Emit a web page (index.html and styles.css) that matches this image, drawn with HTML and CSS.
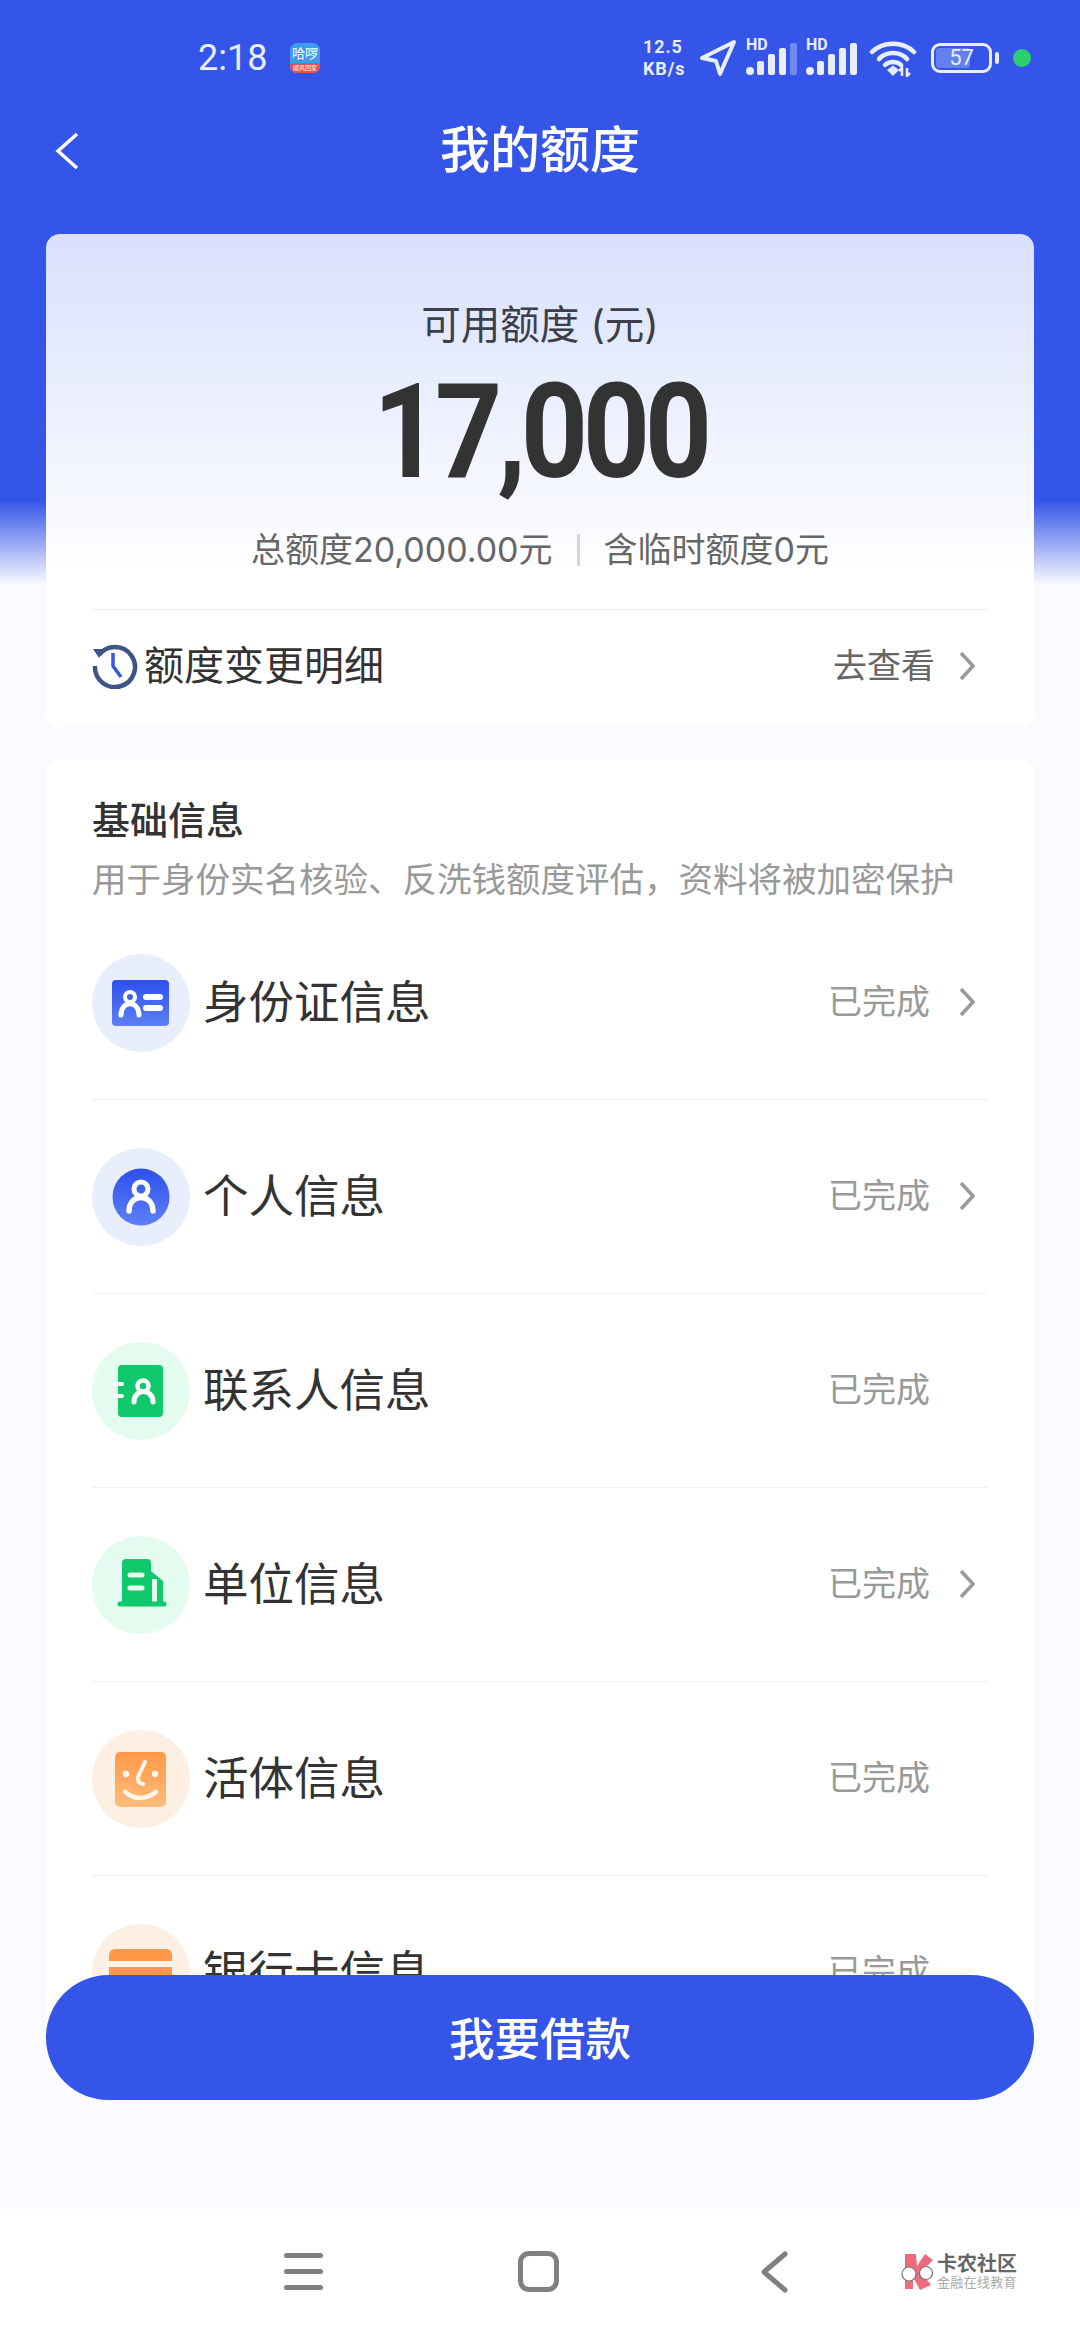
FILE: index.html
```html
<!DOCTYPE html>
<html lang="zh-CN">
<head>
    <meta charset="UTF-8">
    <meta name="viewport" content="width=device-width, initial-scale=1.0">
    <title>我的额度</title>
    <link rel="stylesheet" href="styles.css">
</head>
<body>
    <div class="page">
        <!-- Status bar -->
        <div class="status-bar">
            <span class="clock">2:18</span>
            <div class="app-badge">
                <span class="app-badge-top">哈啰</span>
                <span class="app-badge-bottom">顺风回家</span>
            </div>
            <div class="status-right">
                <div class="speed"><span>12.5</span><span>KB/s</span></div>
                <svg class="ico-arrow" width="38" height="38" viewBox="0 0 38 38"><path d="M35 3 L3 19 L17 22 L21 35 Z" fill="none" stroke="#e8edff" stroke-width="4" stroke-linejoin="round"/></svg>
                <div class="signal">
                    <span class="hd">HD</span>
                    <svg width="52" height="34" viewBox="0 0 52 34"><g fill="#e8edff"><rect x="1" y="25" width="8" height="8" rx="4"/><rect x="12" y="19" width="7" height="14" rx="2"/><rect x="23" y="12" width="7" height="21" rx="2"/><rect x="34" y="6" width="7" height="27" rx="2"/><rect x="45" y="1" width="7" height="32" rx="2" fill="#6f89f2"/></g></svg>
                </div>
                <div class="signal">
                    <span class="hd">HD</span>
                    <svg width="52" height="34" viewBox="0 0 52 34"><g fill="#e8edff"><rect x="1" y="25" width="8" height="8" rx="4"/><rect x="12" y="19" width="7" height="14" rx="2"/><rect x="23" y="12" width="7" height="21" rx="2"/><rect x="34" y="6" width="7" height="27" rx="2"/><rect x="45" y="1" width="7" height="32" rx="2"/></g></svg>
                </div>
                <svg class="ico-wifi" width="48" height="38" viewBox="0 0 48 38">
                    <g fill="none" stroke="#e8edff" stroke-width="4.5" stroke-linecap="round">
                        <path d="M3 13 C14 2 34 2 45 13"/>
                        <path d="M10 20 C17 12 31 12 38 20"/>
                        <path d="M16 26 C20 22 28 22 32 26"/>
                    </g>
                    <path d="M18 31 L24 26.5 L30 31 L24 37 Z" fill="#e8edff"/>
                    <path d="M33 37 V29 L30 32 M38 29 V37 L41 34" fill="none" stroke="#e8edff" stroke-width="2.5"/>
                </svg>
                <div class="battery">
                    <div class="battery-body">
                        <div class="battery-fill"></div>
                        <span class="battery-num">57</span>
                    </div>
                    <div class="battery-nub"></div>
                </div>
                <div class="green-dot"></div>
            </div>
        </div>

        <!-- Title bar -->
        <div class="title-bar">
            <svg class="back" width="24" height="38" viewBox="0 0 24 38"><path d="M22 2 L3 19 L22 36" fill="none" stroke="#fff" stroke-width="3.5"/></svg>
            <h1>我的额度</h1>
        </div>

        <div class="scroll">
            <div class="card credit">
                <div class="credit-label">可用额度 (元)</div>
                <div class="credit-amount">17,000</div>
                <div class="credit-sub">
                    <span>总额度20,000.00元</span>
                    <i class="sub-line"></i>
                    <span>含临时额度0元</span>
                </div>
                <div class="detail-row">
                    <svg width="46" height="46" viewBox="0 0 46 46">
                        <path d="M7 12 A20 20 0 1 1 3 23" fill="none" stroke="#3f5387" stroke-width="4.5"/>
                        <path d="M1 6 L12 6 L7 15 Z" fill="#3f5387"/>
                        <path d="M21 10 V23 L29 34" fill="none" stroke="#3556e6" stroke-width="3.5"/>
                    </svg>
                    <span class="detail-name">额度变更明细</span>
                    <span class="detail-go">去查看</span>
                    <svg class="chev" width="16" height="28" viewBox="0 0 16 28"><path d="M2 1 L14 14 L2 27" fill="none" stroke="#999" stroke-width="3.5"/></svg>
                </div>
            </div>

            <div class="card basic">
                <div class="basic-title">基础信息</div>
                <div class="basic-desc">用于身份实名核验、反洗钱额度评估&#xFF0C;资料将被加密保护</div>

                <div class="row">
                    <svg class="row-ico" width="98" height="98" viewBox="0 0 98 98">
                        <defs>
                            <linearGradient id="blue" x1="0" y1="0" x2="0" y2="1"><stop offset="0" stop-color="#2e50ec"/><stop offset="1" stop-color="#5d80f6"/></linearGradient>
                            <linearGradient id="orange" x1="0" y1="0" x2="0" y2="1"><stop offset="0" stop-color="#ff9848"/><stop offset="1" stop-color="#ffbc7c"/></linearGradient>
                        </defs>
                        <circle cx="49" cy="49" r="49" fill="#e9eefc"/>
                        <rect x="20" y="26" width="57" height="46" rx="4" fill="url(#blue)"/>
                        <g fill="none" stroke="#fff" stroke-linecap="round">
                            <circle cx="38" cy="43" r="5" stroke-width="4"/>
                            <path d="M29 61 C29 46 47 46 47 61" stroke-width="5"/>
                            <path d="M54 43 H68 M54 54 H68" stroke-width="6"/>
                        </g>
                    </svg>
                    <span class="row-name">身份证信息</span>
                    <span class="row-state">已完成</span>
                    <span class="arrow"><svg width="16" height="28" viewBox="0 0 16 28"><path d="M2 1 L14 14 L2 27" fill="none" stroke="#999" stroke-width="3.5"/></svg></span>
                </div>

                <div class="row">
                    <svg class="row-ico" width="98" height="98" viewBox="0 0 98 98">
                        <circle cx="49" cy="49" r="49" fill="#e9eefc"/>
                        <circle cx="49" cy="49" r="28.5" fill="url(#blue)"/>
                        <g fill="none" stroke="#fff" stroke-linecap="round">
                            <circle cx="49" cy="41" r="7" stroke-width="5"/>
                            <path d="M37 63 C37 45 61 45 61 63" stroke-width="5.5"/>
                        </g>
                    </svg>
                    <span class="row-name">个人信息</span>
                    <span class="row-state">已完成</span>
                    <span class="arrow"><svg width="16" height="28" viewBox="0 0 16 28"><path d="M2 1 L14 14 L2 27" fill="none" stroke="#999" stroke-width="3.5"/></svg></span>
                </div>

                <div class="row">
                    <svg class="row-ico" width="98" height="98" viewBox="0 0 98 98">
                        <circle cx="49" cy="49" r="49" fill="#e4fbf0"/>
                        <rect x="26" y="23" width="45" height="52" rx="4" fill="#10c96c"/>
                        <g fill="none" stroke="#fff" stroke-linecap="round">
                            <path d="M23 42 H30 M23 54 H30" stroke-width="4"/>
                            <circle cx="51" cy="44" r="5.5" stroke-width="4.5"/>
                            <path d="M42 60 C42 46 61 46 61 60" stroke-width="5"/>
                        </g>
                    </svg>
                    <span class="row-name">联系人信息</span>
                    <span class="row-state">已完成</span>
                    <span class="arrow"></span>
                </div>

                <div class="row">
                    <svg class="row-ico" width="98" height="98" viewBox="0 0 98 98">
                        <circle cx="49" cy="49" r="49" fill="#e4fbf0"/>
                        <path d="M30 27 a4 4 0 0 1 4 -4 h21 a4 4 0 0 1 4 4 v8 l12 10 v23 H30 Z" fill="#10c96c"/>
                        <rect x="60" y="43" width="5" height="25" fill="#e4fbf0"/>
                        <path d="M28 68 H72" stroke="#10c96c" stroke-width="5" stroke-linecap="round"/>
                        <path d="M38 39 H50 M38 52 H50" stroke="#e4fbf0" stroke-width="5" stroke-linecap="round"/>
                    </svg>
                    <span class="row-name">单位信息</span>
                    <span class="row-state">已完成</span>
                    <span class="arrow"><svg width="16" height="28" viewBox="0 0 16 28"><path d="M2 1 L14 14 L2 27" fill="none" stroke="#999" stroke-width="3.5"/></svg></span>
                </div>

                <div class="row">
                    <svg class="row-ico" width="98" height="98" viewBox="0 0 98 98">
                        <circle cx="49" cy="49" r="49" fill="#fdefe2"/>
                        <rect x="23" y="22" width="51" height="55" rx="5" fill="url(#orange)"/>
                        <g fill="none" stroke="#fff5ea" stroke-linecap="round">
                            <circle cx="34" cy="44" r="1.5" stroke-width="3.5"/>
                            <circle cx="63" cy="44" r="1.5" stroke-width="3.5"/>
                            <path d="M53 32 L46 47 Q45 53 51 54" stroke-width="4"/>
                            <path d="M33 62 Q48 74 64 62" stroke-width="4.5"/>
                        </g>
                    </svg>
                    <span class="row-name">活体信息</span>
                    <span class="row-state">已完成</span>
                    <span class="arrow"></span>
                </div>

                <div class="row">
                    <svg class="row-ico" width="98" height="98" viewBox="0 0 98 98">
                        <circle cx="49" cy="49" r="49" fill="#fdefe2"/>
                        <rect x="17" y="25" width="63" height="50" rx="6" fill="#ff9848"/>
                        <rect x="14" y="37" width="69" height="6" fill="#fff5ea"/>
                    </svg>
                    <span class="row-name">银行卡信息</span>
                    <span class="row-state">已完成</span>
                    <span class="arrow"></span>
                </div>
            </div>
        </div>

        <button class="borrow-btn">我要借款</button>

        <!-- Bottom system bar -->
        <div class="nav-bar">
            <div class="nav-menu"><i></i><i></i><i></i></div>
            <div class="nav-home"></div>
            <svg class="nav-back" width="28" height="42" viewBox="0 0 28 42"><path d="M25 3 L4 21 L25 39" fill="none" stroke="#808080" stroke-width="5" stroke-linecap="round" stroke-linejoin="round"/></svg>
            <div class="logo">
                <svg width="34" height="38" viewBox="0 0 34 38">
                    <path d="M5 1 H16 L17 13 L25 1 L33 7 L21 19 L31 32 L20 37 L13 24 V36 H5 Z" fill="#ec6b7c"/>
                    <circle cx="9" cy="21" r="7" fill="#fff" stroke="#777" stroke-width="1.2"/>
                    <circle cx="26" cy="20" r="6.5" fill="#fff" stroke="#777" stroke-width="1.2"/>
                </svg>
                <div class="logo-text">
                    <span class="logo-name">卡农社区</span>
                    <span class="logo-sub">金融在线教育</span>
                </div>
            </div>
        </div>
    </div>
</body>
</html>
```

FILE: styles.css
```css
* {
    box-sizing: border-box;
}

body {
    margin: 0;
    font-family: "Inter", "Noto Sans CJK SC", sans-serif;
    color: #333;
}

.page {
    width: 1080px;
    height: 2340px;
    overflow: hidden;
    display: flex;
    flex-direction: column;
    background: linear-gradient(#3554e8 0, #3554e8 500px, #f9fbff 585px);
}

/* status bar */
.status-bar {
    height: 100px;
    padding: 16px 49px 0 198px;
    display: flex;
    align-items: center;
    color: #e8edff;
}

.clock {
    font-family: Roboto, sans-serif;
    font-size: 36px;
    width: 92px;
}

.app-badge {
    width: 30px;
    height: 30px;
    border-radius: 7px;
    overflow: hidden;
    display: flex;
    flex-direction: column;
    background: #3d9bf0;
    text-align: center;
}

.app-badge-top {
    height: 20px;
    font-size: 13px;
    line-height: 20px;
    color: #fff;
    white-space: nowrap;
}

.app-badge-bottom {
    height: 10px;
    font-size: 6px;
    line-height: 10px;
    color: #fff;
    background: #e8504f;
    white-space: nowrap;
}

.status-right {
    margin-left: auto;
    display: flex;
    align-items: center;
}

.speed {
    width: 50px;
    display: flex;
    flex-direction: column;
    font-family: Roboto, sans-serif;
    font-weight: 700;
    font-size: 18px;
    line-height: 22px;
    letter-spacing: 0.9px;
}

.ico-arrow {
    margin-left: 6px;
}

.signal {
    position: relative;
    width: 52px;
    height: 36px;
    margin-left: 8px;
}

.signal svg {
    display: block;
    margin-top: 2px;
}

.hd {
    position: absolute;
    left: 1px;
    top: -3px;
    font-family: Roboto, sans-serif;
    font-weight: 700;
    font-size: 16px;
    line-height: 16px;
}

.ico-wifi {
    margin-left: 12px;
}

.battery {
    margin-left: 14px;
    display: flex;
    align-items: center;
}

.battery-body {
    position: relative;
    width: 61px;
    height: 30px;
    border: 3px solid #e8edff;
    border-radius: 9px;
    text-align: center;
    font-family: Roboto, sans-serif;
    font-size: 22px;
    line-height: 24px;
}

.battery-fill {
    position: absolute;
    left: 2px;
    top: 2px;
    bottom: 2px;
    width: 34px;
    background: #6480f0;
    border-radius: 3px;
}

.battery-num {
    position: relative;
}

.battery-nub {
    width: 4px;
    height: 12px;
    margin-left: 3px;
    background: #e8edff;
    border-radius: 2px;
}

.green-dot {
    width: 18px;
    height: 18px;
    margin-left: 14px;
    border-radius: 50%;
    background: #2fcf6f;
}

/* title */
.title-bar {
    position: relative;
    height: 100px;
    padding-bottom: 8px;
    display: flex;
    align-items: center;
    justify-content: center;
}

.title-bar h1 {
    margin: 0;
    font-size: 50px;
    font-weight: 500;
    color: #fff;
}

.back {
    position: absolute;
    left: 55px;
    top: 32px;
}

/* content */
.scroll {
    height: 1837px;
    padding: 34px 46px 0;
    overflow: hidden;
}

.card {
    background: #fff;
    border-radius: 14px;
}

.credit {
    height: 492px;
    padding-top: 66px;
    text-align: center;
    background: linear-gradient(#d8e0fd 0, #fff 340px);
}

.credit-label {
    font-size: 39.5px;
    line-height: 50px;
    color: #3c3f48;
}

.credit-amount {
    margin-top: 17px;
    margin-bottom: -3px;
    font-family: Roboto, sans-serif;
    font-size: 132px;
    line-height: 130px;
    font-weight: 700;
    letter-spacing: -6px;
    transform: scaleX(0.89);
}

.credit-sub {
    margin-top: 34px;
    display: flex;
    justify-content: center;
    align-items: center;
    font-size: 34px;
    line-height: 44px;
    color: #666;
}

.sub-line {
    width: 3px;
    height: 32px;
    margin: 0 24px;
    background: #d4d4d8;
}

.detail-row {
    margin: 37px 46px 0;
    height: 117px;
    border-top: 1px solid #ececef;
    display: flex;
    align-items: center;
    padding-bottom: 4px;
    padding-right: 13px;
}

.detail-name {
    margin-left: 6px;
    margin-bottom: 6px;
    font-size: 40px;
    color: #333;
}

.detail-go {
    margin-left: auto;
    margin-bottom: 6px;
    font-size: 34px;
    color: #666;
}

.chev {
    margin-left: 24px;
}

.basic {
    margin-top: 34px;
    padding: 35px 46px 0;
}

.basic-title {
    font-size: 38px;
    line-height: 50px;
    font-weight: 500;
}

.basic-desc {
    margin-top: 13px;
    margin-bottom: 4px;
    font-size: 34.5px;
    line-height: 44px;
    color: #999;
    white-space: nowrap;
}

.row {
    height: 194px;
    display: flex;
    align-items: center;
    border-bottom: 1px solid #f0f0f2;
}

.row-ico {
    flex: none;
}

.row-name {
    margin-left: 13px;
    margin-bottom: 8px;
    font-size: 45.5px;
    color: #333;
}

.row-state {
    margin-left: auto;
    margin-bottom: 6px;
    font-size: 34px;
    color: #999;
}

.arrow {
    width: 58px;
    padding-left: 29px;
    margin-bottom: 2px;
    display: flex;
}

.borrow-btn {
    position: relative;
    flex: none;
    height: 125px;
    margin: -62px 46px 0;
    padding-bottom: 4px;
    border: none;
    border-radius: 63px;
    background: #3554e8;
    color: #fff;
    font-family: inherit;
    font-size: 45.5px;
    font-weight: 500;
}

/* bottom bar */
.nav-bar {
    margin-top: auto;
    height: 131px;
    padding-bottom: 6px;
    background: #fff;
    display: flex;
    align-items: center;
    padding-left: 284px;
}

.nav-menu {
    width: 39px;
    height: 37px;
    display: flex;
    flex-direction: column;
    justify-content: space-between;
}

.nav-menu i {
    height: 5px;
    border-radius: 3px;
    background: #808080;
}

.nav-home {
    width: 41px;
    height: 41px;
    margin-left: 195px;
    border: 5px solid #808080;
    border-radius: 11px;
}

.nav-back {
    margin-left: 201px;
}

.logo {
    margin-left: 112px;
    display: flex;
    align-items: center;
    gap: 3px;
}

.logo-text {
    display: flex;
    flex-direction: column;
}

.logo-name {
    font-size: 20px;
    line-height: 22px;
    font-weight: 700;
    color: #666;
    white-space: nowrap;
}

.logo-sub {
    font-size: 13px;
    line-height: 15px;
    color: #aaa;
    letter-spacing: 0.3px;
    white-space: nowrap;
}
```
